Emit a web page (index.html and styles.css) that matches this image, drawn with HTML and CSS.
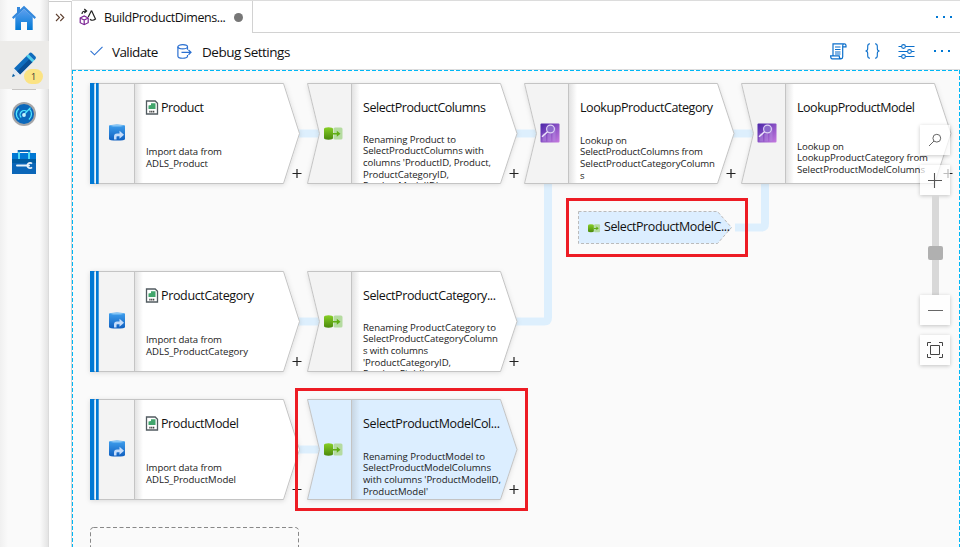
FILE: index.html
```html
<!DOCTYPE html>
<html lang="en">
<head>
<meta charset="utf-8">
<title>BuildProductDimension</title>
<link rel="stylesheet" href="styles.css">
</head>
<body>
<div class="app">
  <nav class="rail">
    <a class="rail-item home"><svg width="26" height="26" viewBox="0 0 26 26"><defs><linearGradient id="hg" x2="0" y2="1"><stop stop-color="#5ea0ef"/><stop offset="1" stop-color="#0078d4"/></linearGradient></defs><path fill="url(#hg)" d="M4.3 12 13 4l8.700 8v13H16v-8h-6v8H4.300z"/><path fill="#3488dc" d="M13 .7 25 12.200 23.600 14 13 4 2.400 14 1 12.200 6 7.400V2h3v2.600z"/></svg></a>
    <a class="rail-item edit"><svg width="26" height="26" viewBox="0 0 26 26"><path fill="#0f6cbd" d="m3 16.5 13-13 6 6-13 13z"/><path fill="#0a4f96" d="m6 19.5 13-13 3 3-13 13z"/><path fill="#50d0ee" d="m15.3 4.2 2-2 6 6-2 2z"/><path fill="#0f6cbd" d="m17.3 2.2 1.6-1.4q1-.6 2 .2l3.5 3.5q1 1.1.2 2.2l-1.3 1.5z"/><path fill="#dfe8f2" d="m3 16.5 6 6-7.7 2.3z"/><path fill="#005ba1" d="m2 21.8 2.2 2.3L1 25z"/></svg><span class="badge">1</span></a>
    <a class="rail-item monitor"><svg width="26" height="26" viewBox="0 0 26 26"><circle cx="13" cy="13" r="12" fill="#a5a5a7"/><circle cx="13" cy="13" r="10" fill="#0b68bb"/><g fill="none" stroke="#50e6ff" stroke-width="1.3"><path d="M8 18.5a7 7 0 0 1 0-11M18.300 8a7 7 0 0 1-.4 10.500"/><path d="M13 13.500 19.500 6.600M10.200 16.500a4 4 0 1 1 5.800-5.600"/></g><circle cx="13" cy="14" r="1.900" fill="#c8f2fc"/></svg></a>
    <a class="rail-item manage"><svg width="26" height="26" viewBox="0 0 26 26"><path d="M7.700 5V2h10.600v3" fill="none" stroke="#0f6cbd" stroke-width="2"/><path fill="#0078d4" d="M1 4h24v21H1z"/><path fill="#005ba1" d="M1 10h24v4H1z"/><path fill="#0b66b8" d="M1 14h24v11H1z"/><path fill="#50d8f4" d="M7 3h2v7H7zM17 3h2v7h-2z"/><path d="M6 16.500h12" stroke="#e8f2fa" stroke-width="2" stroke-linecap="round"/><path d="M21 14.600a2.700 2.700 0 1 0 0 3.800" fill="none" stroke="#e8f2fa" stroke-width="1.800"/></svg></a>
  </nav>
  <aside class="expander"><svg width="10" height="9" viewBox="0 0 10 9"><path d="m1 1 3.5 3.5L1 8M5.3 1l3.5 3.5L5.3 8" fill="none" stroke="#5f4030" stroke-width="1.1"/></svg></aside>
  <main class="workspace">
    <header class="tabs">
      <div class="tab">
        <svg width="18" height="18" viewBox="0 0 18 18" fill="none"><path d="m1.200 10 4-2 4 2v4.700l-4 2-4-2zm0 0 4 2 4-2M5.200 12v4.500" stroke="#7b2494" stroke-width="1.200"/><path d="m12.500 2.500 4 8.500q-3 2.400-5.500.2M12.500 2.500 9.200 9M3 6q0-3 4-3M5.300 1l2.300 2-2.300 2" stroke="#222" stroke-width="1.200"/></svg>
        <span class="tab-title">BuildProductDimens...</span><i class="dirty"></i>
      </div>
      <div class="tab-fill"><svg width="18" height="4"><g fill="#0078d4"><path d="M1 1h2v2H1zM8 1h2v2H8zM15 1h2v2h-2z"/></g></svg></div>
    </header>
    <div class="toolbar">
      <svg class="check" width="13" height="10" viewBox="0 0 13 10"><path d="m.5 4.800 4 4L12.500.8" fill="none" stroke="#2c71d1" stroke-width="1.100"/></svg>
      <span class="validate">Validate</span>
      <svg class="debug-icon" width="15" height="15" viewBox="0 0 15 15" fill="none" stroke="#2c71d1" stroke-width="1.200"><ellipse cx="5.700" cy="2.800" rx="4.800" ry="2.100"/><path d="M.9 2.800v9.500c0 2.600 9.600 2.600 9.600 0V11M10.500 2.800v3M4.500 8.300h9.500M11.500 6l2.500 2.300-2.500 2.400"/></svg>
      <span class="debug">Debug Settings</span>
      <div class="tools">
        <svg width="17" height="17" viewBox="0 0 17 17" fill="none" stroke="#0b6fcb" stroke-width="1.200"><path d="M3 12.500V.8h11.200q1.800 0 1.800 1.700v1.300h-3M14.200.8q-1.500 0-1.500 2v11q0 2-1.700 2H2.200Q.6 15.800.6 12.800h8.600q0 3 1.800 3M5 4h5.500M5 6.500h5.500M5 9h5.500M5 11h5.500"/></svg>
        <svg width="15" height="16" viewBox="0 0 15 16" fill="none" stroke="#0b6fcb" stroke-width="1.100"><path d="M5 .8Q2.700.8 2.700 3.200v2.300Q2.700 8 .5 8q2.200 0 2.200 2.500v2.300Q2.700 15.200 5 15.200M10 .8q2.300 0 2.300 2.400v2.300Q12.300 8 14.500 8q-2.200 0-2.200 2.500v2.300q0 2.400-2.300 2.400"/></svg>
        <svg width="17" height="15" viewBox="0 0 17 15" fill="none" stroke="#0b6fcb" stroke-width="1.100"><path d="M.5 2.500h3M7.500 2.500h9M.5 7.500h9M13.500 7.500h3M.5 12.500h3M7.500 12.500h9"/><circle cx="5.500" cy="2.500" r="1.900"/><circle cx="11.500" cy="7.500" r="1.900"/><circle cx="5.500" cy="12.500" r="1.900"/></svg>
        <svg width="18" height="4"><g fill="#0078d4"><path d="M1 1h2v2H1zM8 1h2v2H8zM15 1h2v2h-2z"/></g></svg>
      </div>
    </div>
    <section class="canvas">
      <svg class="graph" width="888" height="477" viewBox="72 70 888 477">
        <defs>
          <linearGradient id="edge"><stop stop-color="#888" stop-opacity=".24"/><stop offset="1" stop-color="#888" stop-opacity="0"/></linearGradient>
          <linearGradient id="blue" x2="0" y2="1"><stop stop-color="#3fa0ee"/><stop offset="1" stop-color="#0f5fc0"/></linearGradient>
          <linearGradient id="green" x2="0" y2="1"><stop stop-color="#87cf25"/><stop offset="1" stop-color="#4b8a0c"/></linearGradient>
          <linearGradient id="purple" x2="1" y2="1"><stop stop-color="#4a25a8"/><stop offset="1" stop-color="#c77be0"/></linearGradient>
          <filter id="shadow" x="-5%" y="-8%" width="112%" height="120%"><feDropShadow dx="0" dy="1" stdDeviation="2.500" flood-opacity=".13"/></filter>
          <clipPath id="body"><path d="M45 1h170v99H45z"/></clipPath>
          <g id="plus"><path d="M202.500 90.500h9M207 86v9" stroke="#222" stroke-width="1.200"/></g>
          <g id="source">
            <path d="M.5.500h193l16 50-16 50H.5z" fill="#fff" stroke="#c4c4c4" filter="url(#shadow)"/>
            <path d="M8 1h36v99H8z" fill="#f3f3f3"/><path d="M45 1h8v99H45z" fill="url(#edge)"/><path d="M44.500 1v99" stroke="#c4c4c4"/>
            <path d="M0 0h4.500v101H0zM6 0h2.700v101H6z" fill="#0078d4"/><path d="M4.500 1H6v99H4.500z" fill="#e8f4fc"/>
            <path d="M19 43q0-1.500 8-1.500t8 1.500v13q0 1.500-8 1.500t-8-1.500z" fill="url(#blue)"/><path d="M19.500 42.700q7.500 1.800 15 0-7.500-1.800-15 0" fill="#86c5f5"/><path d="M24 56.500v-3q0-3 3-3h2.500v-2.700l4.500 4-4.500 4v-2.500H27q-.5 0-.5.700v2.500z" fill="#c5dcfa"/>
            <path d="M56.500 18h8.700l2.300 2.300V31h-11z" fill="#fff" stroke="#515b60" stroke-width="1.300"/><path d="M58.500 26v-3.500l2.500-.5v-1.700h4.500V26z" fill="#41a56c"/><path d="M59.300 28.700h5.500" stroke="#444" stroke-width="1.700" stroke-dasharray="1.300 .5"/>
            <use href="#plus"/>
          </g>
          <g id="notched">
            <path class="body" d="M.5.500h193l16.500 50-16.500 50H.5l12-50z" filter="url(#shadow)"/>
            <path class="head" d="M1 1h43v99H1l12-49.500z"/><path d="M45 1h8v99H45z" fill="url(#edge)"/><path d="M44.500 1v99" stroke="#c4c4c4"/>
            <path d="M.5.500h193l16.500 50-16.500 50H.5l12-50z" fill="none" stroke="#c4c4c4"/>
            <use href="#plus"/>
          </g>
          <g id="select"><rect x="9.500" width="9" height="12" y=".5" rx="1.500" fill="#b5dba0"/><path d="M0 2q0-1.700 4.500-1.700T9 2v9q0 1.700-4.500 1.700T0 11z" fill="url(#green)"/><path d="M9 6h3.800V3.700l3.700 3-3.700 3V7.500H9z" fill="#5fae13"/></g>
          <g id="lookup"><rect width="19" height="19" rx="1" fill="url(#purple)"/><path d="M2 10h3.500v8H2zM7 10h3.500v8H7zM12 4h3v14h-3z" fill="#b58be0" opacity=".5"/><circle cx="10" cy="5.500" r="3.900" fill="#8a6acb" stroke="#ddd2f5" stroke-width="1.200"/><path d="m7 8.300-5.500 5" stroke="#ece5fb" stroke-width="1.500"/></g>
        </defs>

        <g class="links">
          <path d="M299 133.500h21M516 133.500h21M733 133.500h21M299 321.500h21M299 449.500h21"/>
          <path d="M516 321.500h28q4 0 4-4V184M735 227.500h26q4 0 4-4V184"/>
        </g>

        <g transform="translate(90 83)"><use href="#source"/>
          <text class="title" x="71" y="29" textLength="43">Product</text>
          <g class="desc"><text x="56" y="72" textLength="76">Import data from</text><text x="56" y="84" textLength="62">ADLS_Product</text></g></g>
        <g transform="translate(90 271)"><use href="#source"/>
          <text class="title" x="71" y="29" textLength="93">ProductCategory</text>
          <g class="desc"><text x="56" y="72" textLength="76">Import data from</text><text x="56" y="84" textLength="102">ADLS_ProductCategory</text></g></g>
        <g transform="translate(90 399)"><use href="#source"/>
          <text class="title" x="71" y="29" textLength="78">ProductModel</text>
          <g class="desc"><text x="56" y="72" textLength="76">Import data from</text><text x="56" y="84" textLength="90">ADLS_ProductModel</text></g></g>

        <g transform="translate(307 83)" class="node"><use href="#notched"/><use href="#select" x="17" y="44"/>
          <text class="title" x="56" y="29" textLength="123">SelectProductColumns</text>
          <g class="desc" clip-path="url(#body)"><text x="56" y="60" textLength="93">Renaming Product to</text><text x="56" y="71" textLength="121">SelectProductColumns with</text><text x="56" y="83" textLength="128">columns 'ProductID, Product,</text><text x="56" y="95" textLength="86">ProductCategoryID,</text><text x="56" y="106" textLength="75">ProductModelID'</text></g></g>
        <g transform="translate(307 271)" class="node"><use href="#notched"/><use href="#select" x="17" y="44"/>
          <text class="title" x="56" y="29" textLength="133">SelectProductCategory...</text>
          <g class="desc" clip-path="url(#body)"><text x="56" y="60" textLength="133">Renaming ProductCategory to</text><text x="56" y="71" textLength="135">SelectProductCategoryColumn</text><text x="56" y="83" textLength="65">s with columns</text><text x="56" y="95" textLength="88">'ProductCategoryID,</text><text x="56" y="106" textLength="61">ProductField'</text></g></g>
        <g transform="translate(307 399)" class="node selected"><use href="#notched"/><use href="#select" x="17" y="44"/>
          <text class="title" x="56" y="29" textLength="137">SelectProductModelCol...</text>
          <g class="desc"><text x="56" y="61" textLength="122">Renaming ProductModel to</text><text x="56" y="72" textLength="128">SelectProductModelColumns</text><text x="56" y="84" textLength="138">with columns 'ProductModelID,</text><text x="56" y="96" textLength="65">ProductModel'</text></g></g>
        <g transform="translate(524 83)" class="node"><use href="#notched"/><use href="#lookup" x="16.500" y="40.500"/>
          <text class="title" x="56" y="29" textLength="133">LookupProductCategory</text>
          <g class="desc"><text x="56" y="61" textLength="47">Lookup on</text><text x="56" y="72" textLength="123">SelectProductColumns from</text><text x="56" y="84" textLength="135">SelectProductCategoryColumn</text><text x="56" y="96">s</text></g></g>
        <g transform="translate(741 83)" class="node"><use href="#notched"/><use href="#lookup" x="16.500" y="40.500"/>
          <text class="title" x="56" y="29" textLength="118">LookupProductModel</text>
          <g class="desc"><text x="56" y="67" textLength="47">Lookup on</text><text x="56" y="78" textLength="131">LookupProductCategory from</text><text x="56" y="90" textLength="128">SelectProductModelColumns</text></g></g>

        <path class="reference" d="M578.500 211.500h139l14 16-14 16h-139z"/>
        <use href="#select" transform="translate(588 224) scale(.65)"/>
        <text class="title" x="604" y="231" textLength="126">SelectProductModelC...</text>
        <rect class="drop" x="90.500" y="527.500" width="208" height="60" rx="3"/>
        <rect class="callout" x="567.500" y="199.500" width="179" height="56"/>
        <rect class="callout" x="296.500" y="389.500" width="230" height="120"/>
      </svg>
      <div class="zoom">
        <button class="zoom-button search"><svg width="14" height="14" viewBox="0 0 14 14" fill="none" stroke="#666"><circle cx="8.800" cy="5.200" r="3.900"/><path d="M6 8 1 13"/></svg></button>
        <button class="zoom-button"><svg width="14" height="15" viewBox="0 0 14 15"><path d="M0 7.500h14M6.500 0v15" stroke="#555" stroke-width="1.100"/></svg></button>
        <div class="track"><i class="thumb"></i></div>
        <button class="zoom-button"><svg width="15" height="15" viewBox="0 0 15 15"><path d="M0 7.500h15" stroke="#666"/></svg></button>
        <button class="zoom-button fit"><svg width="16" height="16" viewBox="0 0 16 16" fill="none" stroke="#444"><path d="M3.500 3.500h9v9h-9zM.5 4V.5H4M12 .5h3.500V4M15.500 12v3.500H12M4 15.500H.5V12"/></svg></button>
      </div>
    </section>
  </main>
</div>
</body>
</html>
```
FILE: styles.css
```css
* { box-sizing: border-box; }
body { margin: 0; overflow: hidden; background: #fff; color: #111; font-family: "Open Sans", "Noto Sans", sans-serif; }
svg { display: block; flex: none; }
.app { display: flex; width: 960px; height: 547px; }
.rail { width: 49px; flex: none; display: flex; flex-direction: column; background: linear-gradient(90deg, #f0f0f0, #fafafa 8px, #fafafa 40px, #e4e4e4 48px, #d2d2d2); }
.rail-item { position: relative; display: flex; justify-content: center; align-items: center; padding-right: 1px; height: 48px; }
.home { height: 41px; padding-bottom: 6px; }
.edit { background: #ecebe9; }
.monitor { height: 49px; }
.monitor::before { content: ""; position: absolute; top: 0; left: 12px; width: 24px; height: 1px; background: #c8c6c4; }
.badge { position: absolute; left: 24px; top: 28px; width: 19px; height: 15px; border-radius: 8px; background: #fbe383; font-size: 9px; line-height: 15px; text-align: center; color: #333; }
.expander { width: 23px; flex: none; margin-top: 1px; border-top: 1px solid #ccc; border-right: 1px solid #d5d5d5; padding: 11px 0 0 6px; }
.workspace { flex: 1; min-width: 0; display: flex; flex-direction: column; }
.tabs { height: 33px; flex: none; display: flex; border-top: 1px solid #dcdcdc; }
.tab { width: 181px; display: flex; align-items: center; border-right: 1px solid #d2d2d2; padding-left: 7px; }
.tab-title { width: 124px; margin-left: 7px; padding-top: 1px; font-size: 12.5px; letter-spacing: -0.4px; white-space: nowrap; }
.dirty { width: 9px; height: 9px; margin-left: 6px; border-radius: 50%; background: #777; }
.tab-fill { flex: 1; display: flex; align-items: center; justify-content: flex-end; padding-right: 7px; border-bottom: 1px solid #d2d2d2; }
.toolbar { height: 37px; flex: none; display: flex; align-items: center; padding: 0 9px 0 18px; border-bottom: 1px solid #ddd; font-size: 13.5px; white-space: nowrap; }
.validate { width: 47px; margin-left: 9px; padding-top: 2px; letter-spacing: -0.6px; }
.debug-icon { margin-left: 18px; }
.debug { margin-left: 10px; padding-top: 2px; letter-spacing: -0.5px; }
.tools { display: flex; align-items: center; gap: 18px; margin-left: auto; }
.canvas { position: relative; flex: 1; min-height: 0; overflow: hidden; background: linear-gradient(90deg, #00b7f5 67%, transparent 0) 0 0 / 6px 1px repeat-x, linear-gradient(#00b7f5 67%, transparent 0) 0 0 / 1px 6px repeat-y, linear-gradient(#00b7f5 67%, transparent 0) 100% 0 / 1px 6px repeat-y, #fafafa; }
.links { fill: none; stroke: #ddeffd; stroke-width: 8px; }
.node { --body: #fff; --head: #f3f3f3; }
.selected { --body: #dceeff; --head: #dceeff; }
.body { fill: var(--body); }
.head { fill: var(--head); }
.title { font-size: 12.5px; fill: #111; }
.desc { font-size: 9.6px; fill: #222; }
.reference { fill: #dceeff; stroke: #bbb; stroke-dasharray: 3 2; }
.drop { fill: none; stroke: #888; stroke-dasharray: 4 2.5; }
.callout { fill: none; stroke: #ed1c24; stroke-width: 3px; }
.zoom { position: absolute; left: 848px; top: 55px; width: 30px; display: flex; flex-direction: column; align-items: center; }
.zoom-button { display: grid; place-items: center; width: 30px; height: 30px; padding: 0; border: 0; background: rgba(255, 255, 255, .7); box-shadow: 0 1px 4px rgba(0, 0, 0, .22); }
.search { margin-bottom: 10px; }
.fit { margin-top: 10px; }
.track { width: 7px; height: 100px; display: flex; align-items: center; justify-content: center; background: #d8d8d8; padding-top: 16px; }
.thumb { flex: none; width: 15px; height: 14px; border-radius: 2px; background: #b0b0b0; }
```
